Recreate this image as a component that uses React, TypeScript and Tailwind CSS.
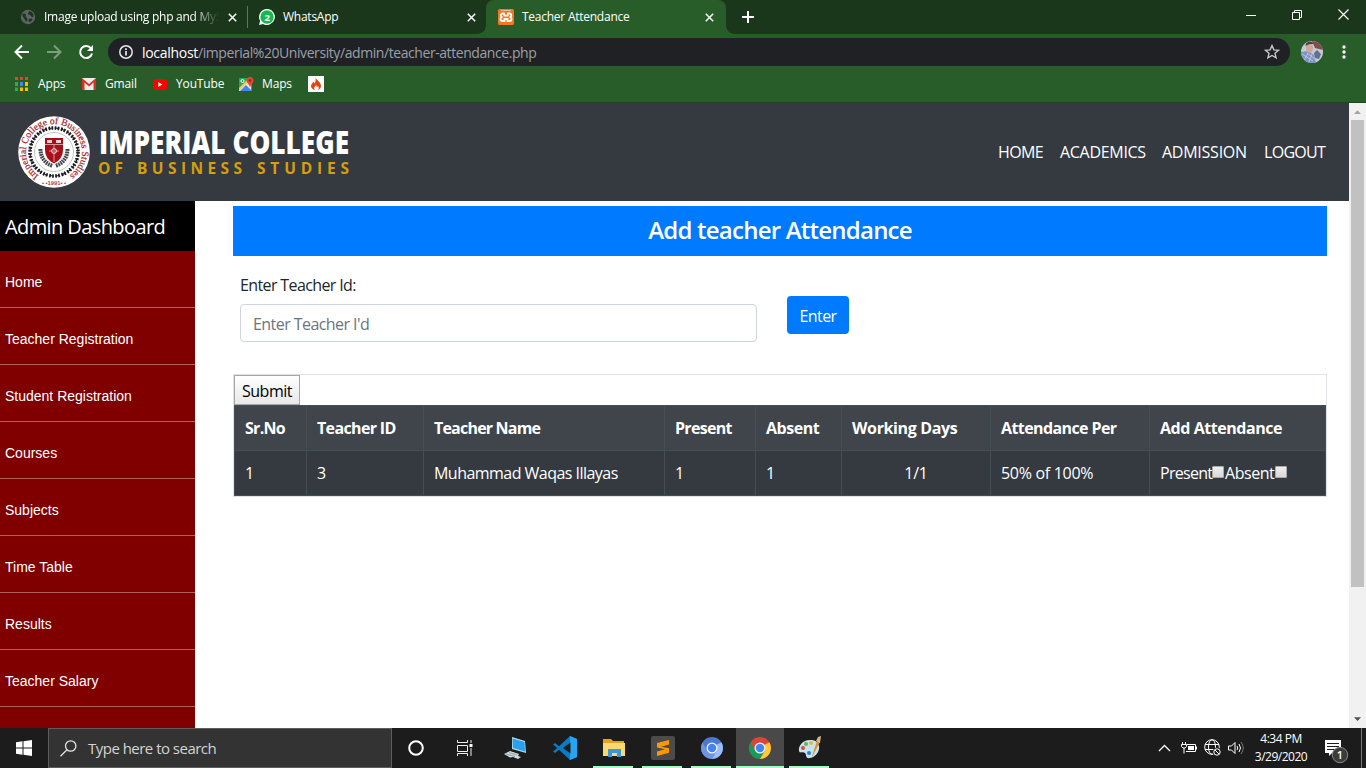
import React from 'react';

const menu = ['Home', 'Teacher Registration', 'Student Registration', 'Courses', 'Subjects', 'Time Table', 'Results', 'Teacher Salary'];

function X() {
  return (
    <svg width="9" height="9" viewBox="0 0 9 9" className="shrink-0">
      <path d="M0.8 0.8 8.2 8.2M8.2 0.8 0.8 8.2" stroke="#f1f5f1" strokeWidth="1.6" />
    </svg>
  );
}

function TabStrip() {
  return (
    <div className="flex h-[34px] bg-[#1b371b] text-[12px] tracking-[-0.25px]">
      <div className="flex w-[248px] items-center border-r bg-clip-padding pl-5 pr-[10px] [border-image:linear-gradient(#1b371b_20%,#5d785d_20%,#5d785d_80%,#1b371b_80%)_1]">
        <svg width="16" height="16" viewBox="0 0 16 16" className="mr-2 shrink-0">
          <circle cx="8" cy="8" r="7.200" fill="#5f6368" />
          <path d="M2.300 5c1.500-1 3-.5 3.500.5S5 7.500 6.500 8.500s1 2 .5 3.500-2-.5-2.500-2S2 8 2.300 5zM9 2c.5 1.500-1.500 2-1 3s2.500.5 3 2 2 1.500 2.500.5C14 5 12 2.500 9 2zM9 10c1.500-1 3-.5 3.500 0-.5 2-2 3-3 3s-1.500-2-.5-3z" fill="#1b371b" />
        </svg>
        <div className="w-[175px] overflow-hidden whitespace-nowrap [mask-image:linear-gradient(to_right,black_85%,transparent)]">Image upload using php and MySQL</div>
        <div className="ml-auto"><X /></div>
      </div>
      <div className="flex w-[238px] items-center rounded-br-lg pl-[11px] pr-[10px]">
        <svg width="16" height="16" viewBox="0 0 16 16" className="mr-2 shrink-0">
          <path d="M8 0a8 8 0 1 1-4 15L0 16l1.100-4A8 8 0 0 1 8 0z" fill="#fff" />
          <circle cx="8" cy="8" r="6.700" fill="#12b94c" />
          <text x="8" y="11.500" textAnchor="middle" fontSize="9.500" fontWeight="700" fill="#fff">2</text>
        </svg>
        <span>WhatsApp</span>
        <div className="ml-auto"><X /></div>
      </div>
      <div className="relative flex w-[240px] items-center rounded-t-lg bg-[#285d2a] pl-3 pr-[12px] before:absolute before:bottom-0 before:-left-2 before:h-2 before:w-2 before:bg-[radial-gradient(circle_at_top_left,#1b371b_7.5px,#285d2a_8px)] after:absolute after:bottom-0 after:-right-2 after:h-2 after:w-2 after:bg-[radial-gradient(circle_at_top_right,#1b371b_7.5px,#285d2a_8px)]">
        <svg width="16" height="16" viewBox="0 0 16 16" className="mr-2 shrink-0">
          <rect width="16" height="16" rx="1.500" fill="#f37623" />
          <path d="M3 1.500h10" stroke="#f9b98d" />
          <path d="M6 4.500H4.500a1.700 1.700 0 0 0 0 3.500 2 2 0 0 0 0 4H6.500V10h3v2h2a2 2 0 0 0 0-4 1.700 1.700 0 0 0 0-3.500H10L9.500 6.700h-3z" fill="none" stroke="#fff" strokeWidth="1.800" />
        </svg>
        <span>Teacher Attendance</span>
        <div className="ml-auto"><X /></div>
      </div>
      <div className="flex flex-1 items-center pl-4">
        <svg width="12" height="12" viewBox="0 0 12 12"><path d="M6 0v12M0 6h12" stroke="#fff" strokeWidth="2" /></svg>
        <div className="ml-auto flex items-center gap-[36px] pb-[5px] pr-[17px]">
          <svg width="10" height="10" viewBox="0 0 10 10"><path d="M0 5.500h10" stroke="#fff" /></svg>
          <svg width="10" height="10" viewBox="0 0 10 10" fill="none" stroke="#fff" className="mt-px"><path d="M.5 2.500h7v7h-7zM2.500 2.500v-2h7v7h-2" /></svg>
          <svg width="11" height="11" viewBox="0 0 11 11" stroke="#fff" strokeWidth="1.200"><path d="M.5.5l10 10M10.500.5l-10 10" /></svg>
        </div>
      </div>
    </div>
  );
}

function Toolbar() {
  return (
    <div className="flex h-9 items-center bg-[#285d2a] pl-[14px] pr-[20px]">
      <svg width="16" height="16" viewBox="0 0 16 16" fill="none" stroke="#fff" strokeWidth="2"><path d="M15 8H2M8 1.500 1.500 8 8 14.500" /></svg>
      <svg width="16" height="16" viewBox="0 0 16 16" fill="none" stroke="#7d9e7e" strokeWidth="2" className="ml-4"><path d="M1 8h13M8 1.500 14.500 8 8 14.500" /></svg>
      <svg width="16" height="16" viewBox="0 0 16 16" className="ml-4"><path d="M13 4.500A6 6 0 1 0 14 9.500" fill="none" stroke="#fff" strokeWidth="2" /><path d="M15 1v6H9z" fill="#fff" /></svg>
      <div className="ml-[14px] flex h-7 w-[1182px] items-center rounded-full bg-[#202124] pl-[11px] pr-[10px]">
        <svg width="14" height="14" viewBox="0 0 14 14" className="mr-[9px]"><circle cx="7" cy="7" r="6.200" fill="none" stroke="#e8eaed" strokeWidth="1.500" /><path d="M7 6v4.500M7 3.300v1.600" stroke="#e8eaed" strokeWidth="1.700" /></svg>
        <span className="text-[14px] tracking-[-0.425px] text-[#9aa0a6]"><span className="tracking-[-0.3px] text-white">localhost</span>/imperial%20University/admin/teacher-attendance.php</span>
        <svg width="16" height="16" viewBox="0 0 16 16" className="ml-auto" fill="none" stroke="#c4c7c9" strokeWidth="1.400"><path d="M8 1.600l1.900 4.300 4.700.4-3.600 3 1.100 4.600L8 11.500l-4.100 2.400L5 9.300l-3.600-3 4.700-.4z" /></svg>
      </div>
      <svg width="22" height="22" viewBox="0 0 22 22" className="ml-[11px]">
        <clipPath id="avatar"><circle cx="11" cy="11" r="11" /></clipPath>
        <g clipPath="url(#avatar)">
          <rect width="22" height="22" fill="#c3cad8" />
          <path d="M11 0h11v9l-8-2z" fill="#844f48" />
          <path d="M0 11l7-1 6 4 2 8H0z" fill="#8091c4" />
          <path d="M13 12l3-3 4 4-2 5-4-1z" fill="#62708a" />
          <ellipse cx="8.500" cy="7" rx="3.600" ry="4.800" fill="#d2a799" />
          <path d="M4.500 5c0-5 7-6 8-2l-4 0z" fill="#4d3e40" />
          <path d="M1 13l11 7M1 18l6 4M6 12l8 6M3 20l4-8M8 21l3-8" stroke="#c5cfe8" strokeWidth=".8" />
        </g>
      </svg>
      <svg width="4" height="14" viewBox="0 0 4 14" className="ml-auto" fill="#fff"><circle cx="2" cy="2" r="1.700" /><circle cx="2" cy="7" r="1.700" /><circle cx="2" cy="12" r="1.700" /></svg>
    </div>
  );
}

function Bookmarks() {
  return (
    <div className="flex h-[33px] items-center border-b border-[#1f4620] bg-[#285d2a] pb-[4px] pl-[15px] text-[12px] tracking-[-0.15px]">
      <div className="flex w-[67px] items-center">
        <svg width="13" height="14" viewBox="0 0 13 14" className="mr-[10px]">
          <path d="M0 0h3v3H0zM5 0h3v3H5zM10 0h3v3h-3z" fill="#ea4335" />
          <path d="M0 5h3v4H0zM0 10.500h3V14H0z" fill="#34a853" /><path d="M5 5h3v4H5z" fill="#4285f4" />
          <path d="M10 5h3v4h-3zM5 10.500h3V14H5zM10 10.500h3V14h-3z" fill="#fbbc05" />
        </svg>Apps
      </div>
      <div className="flex w-[71px] items-center">
        <svg width="14" height="12" viewBox="0 0 14 12" className="mr-[9px]"><path d="M0 0h14v12H0z" fill="#eee" /><path d="M0 12V0l7 6 7-6v12h-2.500V4.500L7 8.500l-4.500-4V12z" fill="#d93025" /></svg>Gmail
      </div>
      <div className="flex w-[86px] items-center">
        <svg width="14" height="11" viewBox="0 0 14 11" className="mr-[9px]"><rect width="14" height="11" rx="2.500" fill="#f00" /><path d="M5.300 3v5l4-2.500z" fill="#fff" /></svg>YouTube
      </div>
      <div className="flex w-[69px] items-center">
        <svg width="15" height="15" viewBox="0 0 15 15" className="mr-[8px]"><rect y="1" width="13" height="13" rx="1" fill="#34a061" /><path d="M0 13 12 2v12H0z" fill="#e8eaed" /><path d="M1 14l6-6 6 6z" fill="#4285f4" /><path d="M0 11 9 2h3L0 14z" fill="#fbcb43" /><circle cx="3.500" cy="4" r="1.500" fill="none" stroke="#fff" /><path d="M7.500 3.500a3.500 3.500 0 0 1 7 0c0 2.500-2.500 3-3.500 7-1-4-3.500-4.500-3.500-7z" fill="#ea4335" /><circle cx="11" cy="3.500" r="1.200" fill="#8c221b" /></svg>Maps
      </div>
      <svg width="16" height="16" viewBox="0 0 16 16"><path d="M0 0h16v16H0z" fill="#fff" /><path d="M7.500 2c2 2.500 5.500 4.500 5.500 8 0 2-1.500 3.500-3 4 1-1.500 1-2.500 0-4-.5 1.500-2 1-1.500-1-2 1-3 3.500-1.500 5-2.500-.5-4-2-4-4 0-2 2-2.500 2-4.500 1 .5 1 1 1 2 1.500-1 2-3 1.500-5.500z" fill="#dd4814" /></svg>
    </div>
  );
}

function Crest() {
  return (
    <svg width="72" height="72" viewBox="0 0 72 72" className="shrink-0">
      <defs><path id="ring" d="M20.700 59.400A28 28 0 1 1 51.300 59.400" /></defs>
      <circle cx="36" cy="36" r="35.800" fill="#fff" />
      <text fontFamily="Liberation Serif, serif" fontSize="9.600" fill="#a51d2a" stroke="#a51d2a" strokeWidth=".2"><textPath href="#ring" textLength="143" lengthAdjust="spacing">Imperial College of Business Studies</textPath></text>
      <text x="36" y="69" textAnchor="middle" fontFamily="Liberation Sans, sans-serif" fontSize="5.800" fontWeight="700" fill="#a04550">• •1991• •</text>
      <circle cx="36" cy="36" r="24" fill="none" stroke="#1b1b1b" strokeWidth="3.600" strokeDasharray="1.700 1.300 1.700 1.583" />
      <circle cx="36" cy="36" r="24" fill="none" stroke="#222" strokeWidth="1.200" strokeDasharray="4.700 1.583" />
      <circle cx="36" cy="36" r="19.500" fill="none" stroke="#b5b5b5" strokeWidth=".8" />
      <path d="M22.500 33c0 8 4 14 12 17M49.500 33c0 8-4 14-12 17" fill="none" stroke="#454848" strokeWidth="4" strokeDasharray="1.800 .7" />
      <path d="M27 22h18v12q0 9-9 13.500Q27 43 27 34z" fill="#a80d18" />
      <path d="M29 24h5v3h-5zM38 24h5v3h-5z" fill="#efcdd0" />
      <path d="M27 28.500h18M36 29v17M31 35h10" stroke="#e4a4aa" strokeWidth=".9" />
      <circle cx="36" cy="35" r="2.500" fill="#c75b65" stroke="#fff" strokeWidth=".7" />
    </svg>
  );
}

function Header() {
  return (
    <header className="flex h-[98px] items-center bg-[#343a40] pl-[18px] pr-[25px]">
      <Crest />
      <svg width="256" height="54" viewBox="0 0 256 54" className="ml-[7px]" fontFamily="Open Sans, sans-serif">
        <g transform="translate(2 29) scale(.76 1)"><text fontSize="32" fontWeight="800" fill="#fff" textLength="329" lengthAdjust="spacingAndGlyphs">IMPERIAL COLLEGE</text></g>
        <text x="1" y="49" fontSize="15.500" fontWeight="700" fill="#d69e0b" textLength="25">OF</text>
        <text x="40" y="49" fontSize="15.500" fontWeight="700" fill="#d69e0b" textLength="105">BUSINESS</text>
        <text x="160" y="49" fontSize="15.500" fontWeight="700" fill="#d69e0b" textLength="92">STUDIES</text>
      </svg>
      <nav className="ml-auto flex gap-4 text-[16px] text-white">
        <a className="w-[46px] whitespace-nowrap tracking-[-0.6px]">HOME</a>
        <a className="w-[86px] whitespace-nowrap tracking-[-0.3px]">ACADEMICS</a>
        <a className="w-[86px] whitespace-nowrap tracking-[-0.25px]">ADMISSION</a>
        <a className="w-[60px] whitespace-nowrap tracking-[-0.7px]">LOGOUT</a>
      </nav>
    </header>
  );
}

function Sidebar() {
  return (
    <aside className="w-[195px] shrink-0 overflow-hidden bg-[#800000] text-white">
      <div className="flex h-[50px] items-center bg-black pl-[5px] pt-px text-[20px] tracking-[-0.6px]">Admin Dashboard</div>
      {menu.map((m) => (
        <div key={m} className="flex h-[57px] items-center border-b border-[#b06060] pl-[5px] pt-[6px] font-['Liberation_Sans',sans-serif] text-[14px]">{m}</div>
      ))}
    </aside>
  );
}

const cell = 'border border-[#454d55] pl-[10px]';

function Attendance() {
  return (
    <main className="flex-1 overflow-hidden pl-[38px] pr-[22px] pt-[5px] text-[16px] text-[#212529]">
      <h1 className="h-[50px] bg-[#007bff] text-center text-[24px] font-semibold leading-[48px] tracking-[-0.77px] text-white">Add teacher Attendance</h1>
      <div className="flex pl-[7px] pt-[17px]">
        <div className="w-[517px]">
          <label className="block h-6 leading-6 tracking-[-0.62px]">Enter Teacher Id:</label>
          <div className="mt-[7px] flex h-[38px] items-center rounded border border-[#ced4da] pl-3 pt-[2px] tracking-[-0.56px] text-[#6c757d]">Enter Teacher I'd</div>
        </div>
        <button className="ml-[30px] mt-[23px] h-[38px] w-[62px] rounded bg-[#007bff] pt-px tracking-[-0.6px] text-white">Enter</button>
      </div>
      <div className="mt-8 border border-[#dee2e6]">
        <button className="block h-[30px] w-[66px] border border-[#a6a6a6] bg-linear-to-b from-white to-[#e8e8e8] pt-px tracking-[-0.45px] text-black">Submit</button>
        <table className="h-[91px] w-full table-fixed border-collapse border border-[#25292d] bg-[#343a40] text-left text-white">
          <colgroup><col className="w-[72px]" /><col className="w-[117px]" /><col className="w-[241px]" /><col className="w-[91px]" /><col className="w-[86px]" /><col className="w-[149px]" /><col className="w-[159px]" /><col /></colgroup>
          <thead><tr className="h-[45px] whitespace-nowrap bg-[#40454b] font-bold tracking-[-0.45px]">
            <th className={cell}><span className="tracking-[-0.7px]">Sr.No</span></th>
            <th className={cell}><span className="tracking-[-0.65px]">Teacher ID</span></th>
            <th className={cell}><span className="tracking-[-0.8px]">Teacher Name</span></th>
            <th className={cell}><span className="tracking-[-0.7px]">Present</span></th>
            <th className={cell}>Absent</th>
            <th className={cell}><span className="tracking-[-0.37px]">Working Days</span></th>
            <th className={cell}><span className="tracking-[-0.6px]">Attendance Per</span></th>
            <th className={cell}>Add Attendance</th>
          </tr></thead>
          <tbody><tr className="h-[45px] whitespace-nowrap tracking-[-0.3px]">
            <td className={cell}>1</td>
            <td className={cell}>3</td>
            <td className={cell}><span className="tracking-[-0.53px]">Muhammad Waqas Illayas</span></td>
            <td className={cell}>1</td>
            <td className={cell}>1</td>
            <td className="border border-[#454d55] text-center">1/1</td>
            <td className={cell}>50% of 100%</td>
            <td className={cell}><div className="flex items-center">
              <span className="w-[52px] tracking-[-0.7px]">Present</span><i className="mb-[3px] mr-[1px] h-3 w-3 rounded-[1px] border border-[#aaa] bg-linear-to-b from-[#eee] to-[#d8d8d8]" />
              <span className="w-[50px] tracking-[-0.45px]">Absent</span><i className="mb-[3px] h-3 w-3 rounded-[1px] border border-[#aaa] bg-linear-to-b from-[#eee] to-[#d8d8d8]" />
            </div></td>
          </tr></tbody>
        </table>
      </div>
    </main>
  );
}

function Scrollbar() {
  return (
    <div className="flex w-[17px] flex-col items-center justify-between bg-[#f1f1f1]">
      <svg width="17" height="17" viewBox="0 0 17 17"><path d="M5 11h7L8.500 7.200z" fill="#a3a3a3" /></svg>
      <div className="h-[467px] w-[13px] bg-[#c1c1c1]" />
      <div className="flex-1" />
      <svg width="17" height="17" viewBox="0 0 17 17"><path d="M5 6.200h7L8.500 10z" fill="#505050" /></svg>
    </div>
  );
}

const under = 'relative flex h-full w-[49px] items-center justify-center after:absolute after:bottom-0 after:left-[4px] after:h-[2px] after:w-[40px] after:bg-[#a9f8c0]';

function ChromeLogo({ blue }: { blue?: boolean }) {
  const c = blue ? ['#4b79d2', '#9dbdf8', '#7095df'] : ['#dc4437', '#fccb35', '#129d58'];
  return (
    <svg width="22" height="22" viewBox="0 0 22 22">
      <circle cx="11" cy="11" r="11" fill={c[0]} />
      <path d="M1.500 5.500A11 11 0 0 0 11 22l4.800-8.200L11 11 6.200 13.700z" fill={c[2]} />
      <path d="M20.500 5.500A11 11 0 0 1 11 22l4.800-8.300V6z" fill={c[1]} />
      <path d="M11 5.500h9.500l-4.700 2z" fill={c[0]} />
      <circle cx="11" cy="11" r="5.500" fill="#f2f4f8" /><circle cx="11" cy="11" r="4.200" fill="#4384f2" />
    </svg>
  );
}

function Taskbar() {
  return (
    <div className="flex h-10 bg-[#1c1c1c] text-white">
      <div className="flex w-12 items-center justify-center"><svg width="16" height="16" viewBox="0 0 16 16" fill="#fff"><path d="M0 2.200 6.500 1.300v6.200H0zM7.500 1.200 16 0v7.500H7.500zM0 8.500h6.500v6.200L0 13.800zM7.500 8.500H16V16l-8.500-1.200z" /></svg></div>
      <div className="flex w-[344px] items-center border border-[#5d5d5d] bg-[#333] pl-[11px]">
        <svg width="17" height="17" viewBox="0 0 17 17" fill="none" stroke="#e5e5e5" strokeWidth="1.300"><circle cx="10.700" cy="6" r="5.200" /><path d="M7 9.700.5 16.200" /></svg>
        <span className="ml-[11px] text-[15px] tracking-[-0.52px] text-[#d4d4d4]">Type here to search</span>
      </div>
      <div className="flex w-12 items-center justify-center"><svg width="16" height="16" viewBox="0 0 16 16"><circle cx="8" cy="8" r="6.800" fill="none" stroke="#fff" strokeWidth="2" /></svg></div>
      <div className="flex w-12 items-center justify-center"><svg width="17" height="16" viewBox="0 0 17 16" fill="none" stroke="#eee"><path d="M1.500 0v2.500h10V0M1.500 5.500h10v6h-10zM1.500 16v-2.500h10V16M15 0v3M15 8v8" /><path d="M13.500 4h3v3h-3z" fill="#fff" stroke="none" /></svg></div>
      <div className="flex w-[53px] items-center justify-center"><svg width="24" height="22" viewBox="0 0 24 22"><path d="M9 0l13 4 1 12-14-4z" fill="#b4d9ed" /><path d="M9.500 1.500l12 3.500 .5 9.500-12-3.500z" fill="#28a0ea" /><path d="M1 17l6-3 9 3-1 2 3 1-3 2-5-2-3 .500z" fill="#d4dde1" /><path d="M3 17l9 2.500M6 15.500l8 2.500" stroke="#8f9ca2" /></svg></div>
      <div className="flex w-12 items-center justify-center"><svg width="24" height="24" viewBox="0 0 24 24"><path d="M17 0l7 3v18l-7 3L6 13.700 2 17l-2-1.500L4.200 12 0 8.500 2 7l4 3.300z" fill="#087bc4" /><path d="M17 0l7 3v18l-7 3z" fill="#27a4f1" /><path d="M17.500 6.500v11L10 12z" fill="#1c1c1c" /></svg></div>
      <div className={under}><svg width="22" height="20" viewBox="0 0 22 20"><path d="M0 1h8l2 2h11v5H0z" fill="#e2a325" /><path d="M0 5h22v13H0z" fill="#fbd970" /><path d="M5 19v-8h13v8h-4v-4H9v4z" fill="#3c98d4" /></svg></div>
      <div className={under}><svg width="24" height="24" viewBox="0 0 24 24"><rect width="24" height="24" rx="2" fill="#4b4b4b" /><path d="M6 7l12-3v4.500l-8 2.200 8 1.500v4.500L6 20v-4.500l8-2.300-8-1.700z" fill="#ff9800" /></svg></div>
      <div className={under}><ChromeLogo blue /></div>
      <div className="mr-px flex h-full w-12 items-center justify-center border-b-2 border-[#a9f8c0] bg-[#494949] pt-[2px]"><ChromeLogo /></div>
      <div className={under}><svg width="24" height="24" viewBox="0 0 24 24"><path d="M13 4C6 3 0 9 1 15c1 3 4 0 6 2s0 6 5 5c6-1 10-7 9-12-1-4-4-6-8-6z" fill="#c5e4f1" /><circle cx="5" cy="12" r="2" fill="#df4938" /><circle cx="8" cy="8" r="2" fill="#5bb85a" /><circle cx="13" cy="7" r="2" fill="#e9b632" /><circle cx="11" cy="17" r="2" fill="#387ad1" /><path d="M19 5l-6 18 9-17z" fill="#e48a2b" /><path d="M18 5l2-4 3-1-1 7z" fill="#d7b58b" /></svg></div>
      <div className="ml-auto flex items-center">
        <svg width="13" height="8" viewBox="0 0 13 8" fill="none" stroke="#fff" strokeWidth="1.300"><path d="M1 7l5.500-5.500L12 7" /></svg>
        <svg width="16" height="12" viewBox="0 0 16 12" className="ml-[10px]" fill="none" stroke="#fff"><path d="M6 2.500h8.500v7H5M1.500 0v2M4.500 0v2M.5 2.500h5v2L4 6H2L.5 4.500zM3 6v5.500" /><path d="M7 4h6v4H7zM15 4.500h1v3h-1z" fill="#fff" stroke="none" /></svg>
        <svg width="18" height="18" viewBox="0 0 18 18" className="ml-[7px]" fill="none" stroke="#fff"><circle cx="8" cy="8" r="7.300" /><ellipse cx="8" cy="8" rx="3.500" ry="7.300" /><path d="M1 5.500h14M1 10.500h14" /><circle cx="13" cy="13" r="4.500" fill="#1c1c1c" stroke="none" /><circle cx="13" cy="13" r="3.200" /><path d="M11 11l4 4" /></svg>
        <svg width="17" height="14" viewBox="0 0 17 14" className="ml-[6px]" fill="none" stroke="#fff"><path d="M.5 5h3L7 1.500v11L3.500 9h-3zM9 5q1.500 2 0 4M11 3q3 4 0 8" /><path d="M13 1q4.500 6 0 12" stroke="#777" /></svg>
        <div className="ml-[6px] w-[60px] text-center text-[12px] leading-[18px] tracking-[-0.5px]"><div>4:34 PM</div><div>3/29/2020</div></div>
        <svg width="25" height="26" viewBox="0 0 25 26" className="ml-[13px] mr-[12px] mt-[7px]"><path d="M1 1h16v13H8l-3 3v-3H1z" fill="#fff" /><path d="M3 4.500h12M3 7.500h12M3 10.500h8" stroke="#1c1c1c" /><circle cx="16" cy="16" r="7.700" fill="#3c3c3c" stroke="#888" /><text x="16" y="20" textAnchor="middle" fill="#fff" fontSize="11" fontWeight="600">1</text></svg>
        <div className="mr-1 h-10 w-px bg-[#777]" />
      </div>
    </div>
  );
}

export default function App() {
  return (
    <div className="flex h-[768px] w-[1366px] flex-col overflow-hidden bg-white font-['Open_Sans',sans-serif] text-white">
      <TabStrip />
      <Toolbar />
      <Bookmarks />
      <div className="flex min-h-0 flex-1">
        <div className="flex min-w-0 flex-1 flex-col">
          <Header />
          <div className="flex min-h-0 flex-1"><Sidebar /><Attendance /></div>
        </div>
        <Scrollbar />
      </div>
      <Taskbar />
    </div>
  );
}
